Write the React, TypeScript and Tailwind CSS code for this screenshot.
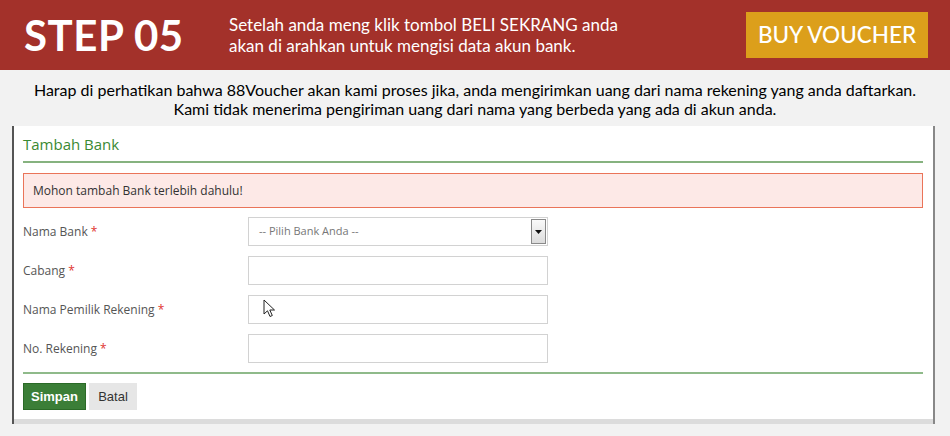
import React from "react";

const fields = [
  { label: "Nama Bank", select: true },
  { label: "Cabang" },
  { label: "Nama Pemilik Rekening", cursor: true },
  { label: "No. Rekening" },
];

const Cursor: React.FC = () => (
  <svg
    className="absolute left-[14px] top-[3px]"
    width="13"
    height="20"
    viewBox="0 0 13 20"
  >
    <path
      d="M1 1 L1 15 L4.5 11.8 L7 17.5 L9.3 16.5 L6.8 11 L11.5 11 Z"
      fill="#fff"
      stroke="#222"
      strokeWidth="1"
      strokeLinejoin="round"
    />
  </svg>
);

const App: React.FC = () => {
  return (
    <div className="h-[436px] w-[950px] overflow-hidden bg-[#f2f2f2] font-['Lato','Open_Sans',sans-serif]">
      {/* red step header */}
      <header className="flex h-[70px] items-center bg-[#a3312a] text-white">
        <h1 className="ml-[24px] w-[205px] whitespace-nowrap text-[42px] font-bold leading-none tracking-[0.5px]">
          STEP 05
        </h1>
        <p className="w-[480px] text-[17px] leading-[21px] text-white">
          Setelah anda meng klik tombol BELI SEKRANG anda
          <br />
          akan di arahkan untuk mengisi data akun bank.
        </p>
        <button className="ml-auto mr-[22px] flex h-[46px] w-[182px] items-center justify-center bg-[#dc9f1b] text-[22.5px] font-medium text-white">
          BUY VOUCHER
        </button>
      </header>

      {/* notice */}
      <div className="h-[56px] pt-[10px] text-center text-[16px] leading-[19px] text-black">
        Harap di perhatikan bahwa 88Voucher akan kami proses jika, anda mengirimkan uang dari nama rekening yang anda daftarkan.
        <br />
        Kami tidak menerima pengiriman uang dari nama yang berbeda yang ada di akun anda.
      </div>

      {/* panel */}
      <div className="ml-[12px] w-[923px]">
        <div className="border-l-2 border-r-2 border-l-[#555] border-r-[#888] bg-white pl-[9px] pr-[10px] font-['Open_Sans',sans-serif]">
          <div className="flex h-[37px] items-end border-b-2 border-[#86b27f] pb-[9px] text-[15px] leading-none text-[#3a8a33]">
            Tambah Bank
          </div>

          <div className="mt-[10px] flex h-[35px] items-center border border-[#ea7459] bg-[#fde9e7] pl-[9px] text-[12px] text-[#333]">
            Mohon tambah Bank terlebih dahulu!
          </div>

          <div className="mt-[9px] flex flex-col gap-[10px]">
            {fields.map((f) => (
              <div key={f.label} className="flex h-[29px] items-center">
                <label className="w-[225px] text-[12px] text-[#555]">
                  {f.label} <span className="text-[#e0332f]">*</span>
                </label>
                <div className="relative flex h-[29px] w-[300px] items-center border border-[#d2d2d2] bg-white">
                  {f.select && (
                    <>
                      <span className="pl-[10px] text-[11px] text-[#777]">
                        -- Pilih Bank Anda --
                      </span>
                      <span className="ml-auto mr-px flex h-[25px] w-[15px] items-center justify-center border border-[#8a8a8a] bg-gradient-to-b from-[#fafafa] to-[#dcdcdc]">
                        <svg width="7" height="4" viewBox="0 0 7 4">
                          <path d="M0 0 H7 L3.5 4 Z" fill="#111" />
                        </svg>
                      </span>
                    </>
                  )}
                  {f.cursor && <Cursor />}
                </div>
              </div>
            ))}
          </div>

          <div className="mt-[9px] border-b-2 border-[#8fba8a]" />

          <div className="flex gap-[3px] pb-[9px] pt-[9px] font-['Liberation_Sans',sans-serif] text-[13px] font-bold">
            <button className="h-[27px] w-[63px] border border-[#2b6a27] bg-[#3b7e37] text-white">
              Simpan
            </button>
            <button className="h-[27px] w-[48px] bg-[#e6e6e6] font-normal text-[#333]">
              Batal
            </button>
          </div>
        </div>
        <div className="flex">
          <div className="h-[5px] w-[2px] bg-[#555]" />
          <div className="h-[5px] flex-1 bg-[#dcdcdc]" />
          <div className="h-[5px] w-[2px] bg-[#888]" />
        </div>
      </div>
    </div>
  );
};

export default App;
